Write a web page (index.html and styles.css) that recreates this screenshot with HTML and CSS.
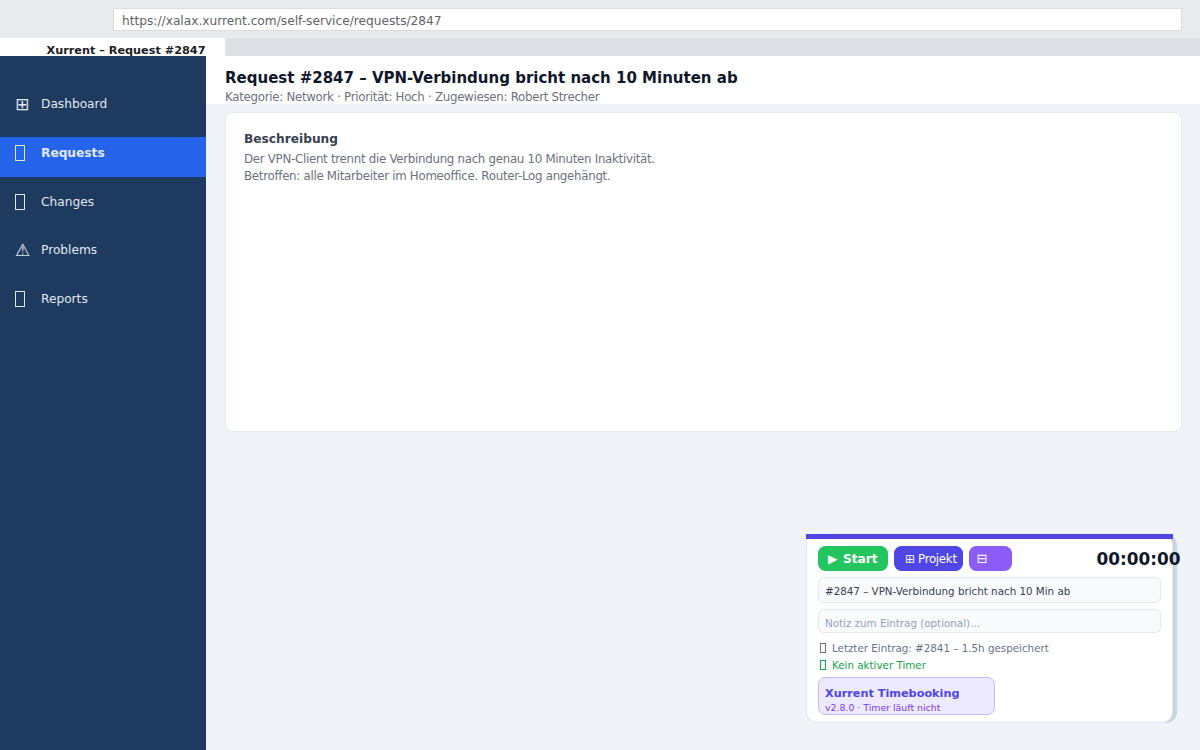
FILE: index.html
```html
<!DOCTYPE html>
<html lang="de">
<head>
  <meta charset="UTF-8">
  <title>Xurrent – Request #2847</title>
  <link rel="stylesheet" href="styles.css">
</head>
<body>
  <div class="browser-bar">
    <div class="url">https://xalax.xurrent.com/self-service/requests/2847</div>
  </div>
  <div class="tabs">
    <div class="tab">Xurrent – Request #2847</div>
  </div>

  <div class="layout">
    <nav class="sidebar">
      <a class="item"><span class="icon">⊞</span>Dashboard</a>
      <a class="item active"><span class="icon"><i class="box"></i></span>Requests</a>
      <a class="item"><span class="icon"><i class="box"></i></span>Changes</a>
      <a class="item"><span class="icon">⚠</span>Problems</a>
      <a class="item"><span class="icon"><i class="box"></i></span>Reports</a>
    </nav>

    <main class="main">
      <header class="header">
        <h1>Request #2847 – VPN-Verbindung bricht nach 10 Minuten ab</h1>
        <p class="meta">Kategorie: Network · Priorität: Hoch · Zugewiesen: Robert Strecher</p>
      </header>
      <section class="card">
        <h2>Beschreibung</h2>
        <p>Der VPN-Client trennt die Verbindung nach genau 10 Minuten Inaktivität.</p>
        <p>Betroffen: alle Mitarbeiter im Homeoffice. Router-Log angehängt.</p>
      </section>
    </main>
  </div>

  <!-- Timebooking widget -->
  <div class="widget">
    <div class="widget-top"></div>
    <div class="controls">
      <div class="btn start"><span class="play">▶</span>Start</div>
      <div class="btn project"><span class="glyph">⊞</span>Projekt</div>
      <div class="btn mini"><span class="glyph">⊟</span></div>
      <div class="timer">00:00:00</div>
    </div>
    <div class="field">#2847 – VPN-Verbindung bricht nach 10 Min ab</div>
    <div class="field note">Notiz zum Eintrag (optional)…</div>
    <div class="status last"><i class="box small"></i>Letzter Eintrag: #2841 – 1.5h gespeichert</div>
    <div class="status idle"><i class="box small"></i>Kein aktiver Timer</div>
    <div class="badge">
      <strong>Xurrent Timebooking</strong>
      <span>v2.8.0 · Timer läuft nicht</span>
    </div>
  </div>
</body>
</html>
```
FILE: styles.css
```css
* {
  box-sizing: border-box;
}
body {
  margin: 0;
  height: 750px;
  overflow: hidden;
  display: flex;
  flex-direction: column;
  font-family: "DejaVu Sans", sans-serif;
  background: #f0f4f9;
}
h1, h2, p {
  margin: 0;
}
.browser-bar {
  height: 37.5px;
  padding: 7.5px 18px 0 112.5px;
  background: #e8eaed;
}
.url {
  height: 23px;
  padding-left: 8.5px;
  border: 1px solid #dadce0;
  background: #fff;
  color: #5f6368;
  font-size: 12.2px;
  line-height: 24px;
}
.tabs {
  height: 18.5px;
  background: #dde1e6;
}
.tab {
  width: 225px;
  height: 18.5px;
  padding-left: 46.5px;
  overflow: hidden;
  background: #fff;
  color: #202124;
  font-size: 11.25px;
  font-weight: bold;
  line-height: 25px;
  white-space: nowrap;
}
.layout {
  display: flex;
  flex: 1;
}
.sidebar {
  width: 206.25px;
  padding-top: 32px;
  background: #1e3a5f;
}
.item {
  display: flex;
  height: 40.5px;
  margin-bottom: 8.25px;
  padding-left: 15px;
  color: #e2e8f0;
  font-size: 12.2px;
  line-height: 32px;
}
.item.active {
  background: #2563eb;
  font-weight: bold;
}
.icon {
  width: 26px;
  font-size: 17px;
  font-weight: normal;
}
.box {
  display: block;
  width: 10px;
  height: 16px;
  margin-top: 8px;
  border: 1px solid #e2e8f0;
}
.main {
  flex: 1;
}
.header {
  height: 48px;
  padding: 12px 0 0 18.75px;
  background: #fff;
}
h1 {
  color: #0f172a;
  font-size: 15px;
  line-height: 20px;
}
.meta {
  color: #6b7280;
  font-size: 11.8px;
  letter-spacing: -0.28px;
  line-height: 18px;
}
.card {
  height: 319.5px;
  margin: 8px 18px 0 18.75px;
  padding: 17px 18px;
  border: 1px solid #e2e8f0;
  border-radius: 7.5px;
  background: #fff;
}
h2 {
  color: #374151;
  font-size: 12.2px;
  line-height: 18px;
}
.card p {
  color: #6b7280;
  font-size: 11.8px;
  letter-spacing: -0.28px;
  line-height: 17px;
}
.card h2 + p {
  margin-top: 3px;
}
.widget {
  position: absolute;
  left: 806px;
  top: 534px;
  width: 367px;
  height: 188.5px;
  padding: 11.5px 11px 0 10.5px;
  border: 1px solid #e2e8f0;
  border-top: 0;
  border-radius: 11px;
  background: #fff;
  box-shadow: 4px 0 0 #cbd5e1;
}
.widget-top {
  position: absolute;
  left: -1px;
  top: 0;
  width: 367px;
  height: 5px;
  background: #4f46e5;
}
.controls {
  display: flex;
  height: 25.5px;
  margin-bottom: 6px;
}
.btn {
  display: flex;
  height: 25.5px;
  border-radius: 7.5px;
  color: #fff;
  white-space: nowrap;
  line-height: 26px;
}
.start {
  width: 70.5px;
  margin-right: 6px;
  padding-left: 10.5px;
  background: #22c55e;
  font-size: 12.2px;
  font-weight: bold;
  line-height: 27px;
}
.play {
  width: 15px;
}
.project {
  width: 69px;
  margin-right: 6px;
  padding-left: 11px;
  background: #4f46e5;
  font-size: 11.8px;
  letter-spacing: -0.28px;
}
.project .glyph {
  width: 13px;
}
.mini {
  width: 42.5px;
  padding-left: 7.5px;
  background: #8b5cf6;
  font-size: 13px;
}
.timer {
  width: 64.5px;
  margin-left: auto;
  color: #0f172a;
  font-size: 16.9px;
  font-weight: bold;
  line-height: 27px;
  white-space: nowrap;
}
.field {
  height: 26px;
  margin-bottom: 6px;
  padding-left: 6.5px;
  border: 1px solid #e2e8f0;
  border-radius: 5.6px;
  background: #f8fafc;
  color: #374151;
  font-size: 10.32px;
  line-height: 26px;
}
.note {
  height: 24px;
  margin-bottom: 6.5px;
  color: #94a3b8;
}
.status {
  display: flex;
  height: 17px;
  padding-left: 2px;
  font-size: 10.32px;
  line-height: 16px;
}
.last {
  color: #64748b;
}
.idle {
  color: #16a34a;
}
.box.small {
  width: 6px;
  height: 10px;
  margin: 3.5px 6.5px 0 0;
  border-color: currentColor;
}
.badge {
  display: flex;
  flex-direction: column;
  width: 177.5px;
  height: 38.5px;
  margin-top: 3px;
  padding: 7px 0 0 6.5px;
  border: 1px solid #c4b5fd;
  border-radius: 7.5px;
  background: #ede9fe;
}
.badge strong {
  color: #4f46e5;
  font-size: 11.25px;
  line-height: 17px;
}
.badge span {
  color: #7c3aed;
  font-size: 9.37px;
  line-height: 12px;
}
```
